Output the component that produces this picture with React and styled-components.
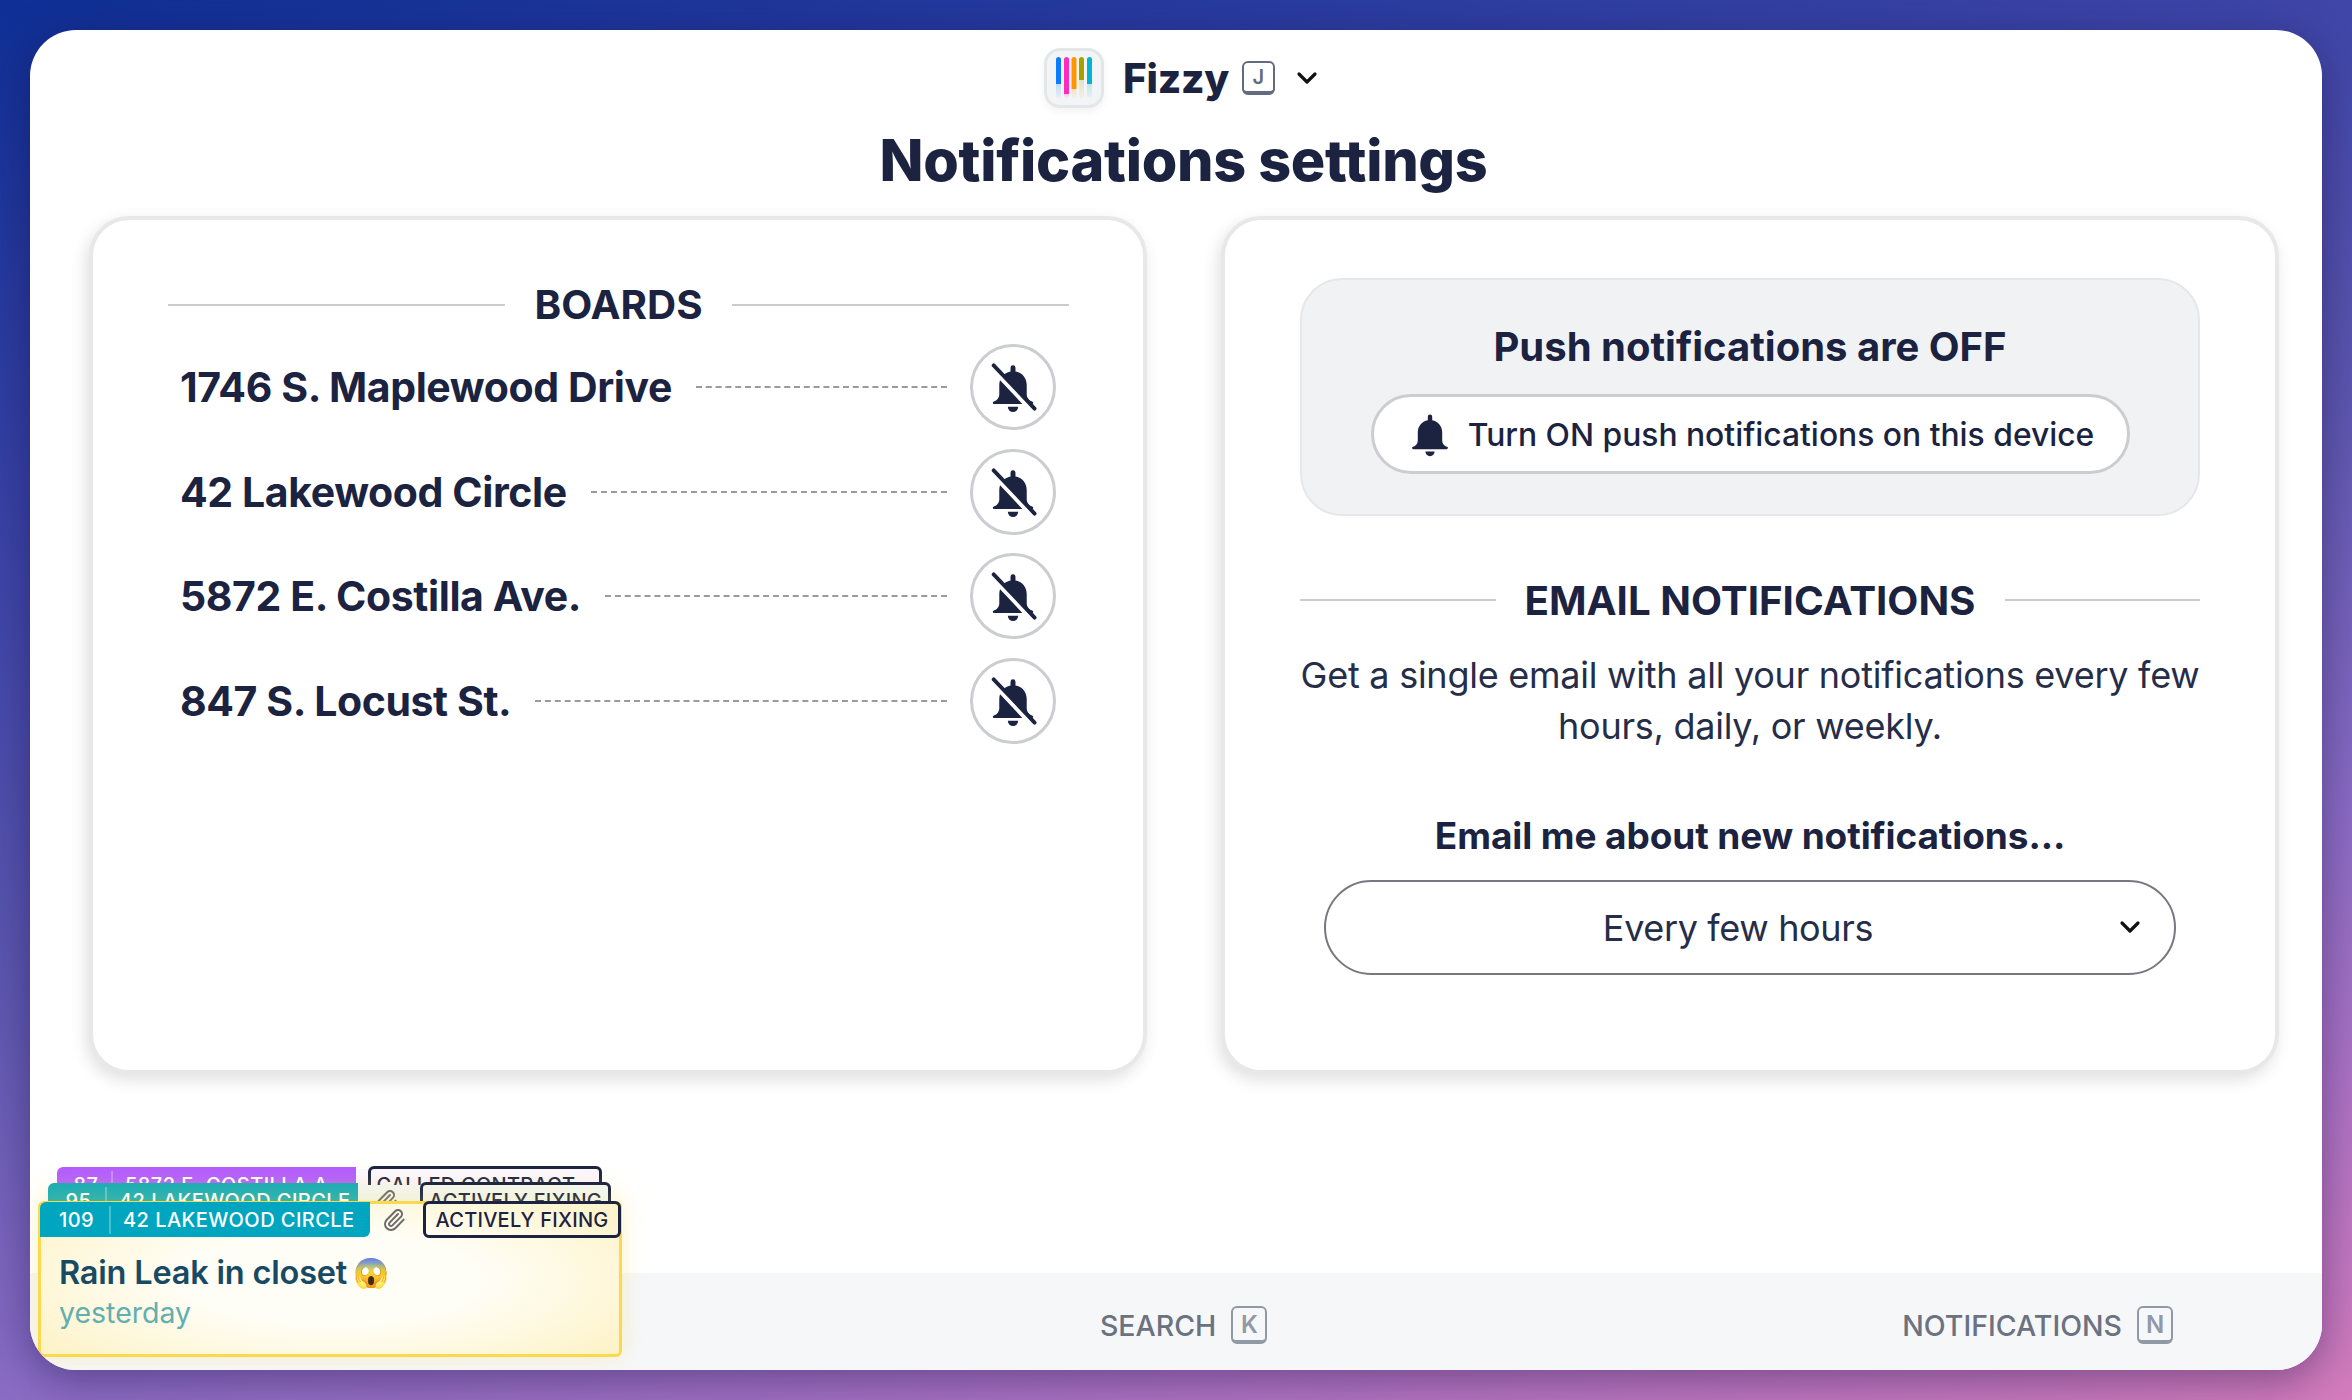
import React from "react";
import styled, { createGlobalStyle } from "styled-components";
import { Paperclip, ChevronDown } from "lucide-react";

const ink = "#1b2340";

const GlobalStyle = createGlobalStyle`
  html, body { margin: 0; padding: 0; }
  body {
    width: 2352px;
    height: 1400px;
    overflow: hidden;
    font-family: Inter, "Noto Sans", sans-serif;
    color: ${ink};
    background: linear-gradient(166deg, #0f2f96 0%, #3f46a8 30%, #5e58b0 50%, #8a6cc4 70%, #b074c4 85%, #d47cbc 100%);
  }
`;

const Window = styled.div`
  position: absolute;
  left: 30px;
  top: 30px;
  width: 2292px;
  height: 1340px;
  border-radius: 46px;
  background: #fff;
  overflow: hidden;
  display: flex;
  flex-direction: column;
`;

const WindowShadow = styled.div`
  position: absolute;
  left: 30px;
  top: 30px;
  width: 2292px;
  height: 1340px;
  border-radius: 46px;
  box-shadow: 0 10px 44px rgba(20, 10, 60, 0.42);
`;

const Main = styled.main`
  flex: 1;
  padding: 18px 44px 0 59px;
  display: flex;
  flex-direction: column;
`;

const Brand = styled.header`
  height: 60px;
  display: flex;
  justify-content: center;
  align-items: center;
`;

const LogoTile = styled.div`
  box-sizing: border-box;
  width: 60px;
  height: 60px;
  border-radius: 16px;
  background: #f3f4f6;
  border: 3px solid #e4e6ea;
  box-shadow: 0 4px 8px rgba(0, 0, 0, 0.05);
  display: flex;
  align-items: center;
  justify-content: center;
`;

const BrandName = styled.span`
  margin-left: 19px;
  font-size: 40.5px;
  font-weight: 800;
  letter-spacing: -0.3px;
`;

const Key = styled.span`
  box-sizing: border-box;
  display: inline-flex;
  align-items: center;
  justify-content: center;
  width: ${p => p.$w}px;
  height: ${p => p.$h}px;
  border: 2px solid ${p => p.$c};
  border-bottom-width: 4px;
  border-radius: 6px;
  font-size: ${p => p.$fs}px;
  font-weight: 600;
  color: ${p => p.$c};
`;

const BrandKey = styled(Key)`
  margin-left: 13px;
`;

const BrandChevron = styled.span`
  margin: 0 6px 0 23px;
  width: 19px;
  height: 38px;
  display: flex;
  align-items: center;
  justify-content: center;
  color: #111;

  svg {
    flex: none;
  }
`;

const Title = styled.h1`
  margin: 20px 0 0;
  height: 64px;
  line-height: 64px;
  text-align: center;
  font-size: 57.5px;
  font-weight: 800;
  letter-spacing: -0.3px;
`;

const Panels = styled.div`
  margin-top: 24px;
  display: grid;
  grid-template-columns: 1058px 1058px;
  gap: 74px;
`;

const Panel = styled.section`
  box-sizing: border-box;
  height: 858px;
  border: 4px solid #e8e8e8;
  border-radius: 40px;
  background: #fff;
  box-shadow: -3px 6px 16px rgba(0, 0, 0, 0.12);
  padding: ${p => p.$pad};
`;

const Divider = styled.div`
  display: flex;
  align-items: center;
  gap: 29px;
  font-size: 40.3px;
  font-weight: 700;
  white-space: nowrap;

  &::before,
  &::after {
    content: "";
    flex: 1;
    height: 2px;
    background: #cbcbd0;
  }
`;

const BoardList = styled.ul`
  list-style: none;
  margin: 15px 0 0;
  padding: 0 13px 0 12px;
  display: flex;
  flex-direction: column;
  gap: 18.7px;
`;

const BoardRow = styled.li`
  display: flex;
  align-items: center;
  height: 86px;
`;

const BoardName = styled.span`
  font-size: 41px;
  font-weight: 700;
  letter-spacing: -0.4px;
  white-space: nowrap;
`;

const Leader = styled.span`
  flex: 1;
  margin: 0 23px 0 24px;
  border-top: 2px dashed #9a9aa0;
`;

const BellCircle = styled.button`
  box-sizing: border-box;
  width: 86px;
  height: 86px;
  border-radius: 50%;
  border: 3px solid #cccdd1;
  background: #fff;
  padding: 0;
  display: flex;
  align-items: center;
  justify-content: center;
`;

const PushBox = styled.div`
  box-sizing: border-box;
  height: 238px;
  border: 2px solid #e6e7ea;
  border-radius: 42px;
  background: #f1f2f4;
  padding: 43px 68px 0;
  display: flex;
  flex-direction: column;
  align-items: center;
`;

const PushTitle = styled.div`
  font-size: 40px;
  line-height: 48px;
  font-weight: 700;
`;

const PushButton = styled.button`
  box-sizing: border-box;
  margin-top: 23px;
  width: 759px;
  height: 80px;
  border: 3px solid #cccdd1;
  border-radius: 40px;
  background: #fff;
  color: ${ink};
  font-family: inherit;
  font-size: 31.8px;
  font-weight: 500;
  display: flex;
  align-items: center;
  justify-content: center;
  gap: 14px;
`;

const EmailHead = styled(Divider)`
  margin-top: 60px;
  height: 48px;
`;

const Blurb = styled.p`
  margin: 26px 0 0;
  text-align: center;
  font-size: 36px;
  line-height: 51px;
  font-weight: 400;
  letter-spacing: -0.25px;
  color: #262d48;
`;

const SelectLabel = styled.div`
  margin-top: 61px;
  text-align: center;
  font-size: 37px;
  line-height: 46px;
  font-weight: 700;
  letter-spacing: -0.1px;
`;

const Select = styled.div`
  box-sizing: border-box;
  position: relative;
  margin: 21px 24px 0;
  height: 95px;
  border: 2px solid #77787f;
  border-radius: 48px;
  display: flex;
  align-items: center;
  justify-content: center;
  padding-right: 24px;
  font-size: 36px;
  letter-spacing: -0.35px;
  color: #262d48;
`;

const SelectChevron = styled.span`
  position: absolute;
  right: 35px;
  top: 26px;
  width: 19px;
  height: 38px;
  display: flex;
  align-items: center;
  justify-content: center;
  color: #111;

  svg {
    flex: none;
  }
`;

const Footer = styled.footer`
  height: 97px;
  background: #f6f7f9;
  display: flex;
  align-items: center;
  justify-content: flex-end;
  gap: 635px;
  padding: 7px 149px 0 0;
  box-sizing: border-box;
`;

const FooterLink = styled.span`
  display: flex;
  align-items: center;
  gap: 15px;
  font-size: 28.5px;
  font-weight: 500;
  color: #6b7280;
`;

const Stack = styled.div`
  position: absolute;
  left: 0;
  top: 0;
  width: 700px;
  height: 1400px;
  overflow: hidden;
  pointer-events: none;
  clip-path: inset(30px 0 30px 30px round 46px 0 0 46px);
`;

const Card = styled.article`
  box-sizing: border-box;
  position: absolute;
  left: ${p => p.$x}px;
  top: ${p => p.$y}px;
  width: ${p => p.$w}px;
  height: 156px;
  border: ${p => p.$border};
  border-radius: 6px;
  background: ${p => p.$bg};
  box-shadow: ${p => p.$glow};
`;

const CardBar = styled.div`
  display: flex;
  align-items: flex-start;
  margin: -2px 0 0 -1px;
`;

const BoardTag = styled.div`
  box-sizing: border-box;
  flex: none;
  height: 35px;
  width: ${p => p.$w}px;
  background: ${p => p.$c};
  border-radius: 6px 0 6px 0;
  color: #fff;
  display: flex;
  align-items: center;
  font-size: 20px;
  font-weight: 500;
  letter-spacing: 0.45px;
  white-space: nowrap;
  overflow: hidden;
`;

const TagNumber = styled.span`
  box-sizing: border-box;
  flex: none;
  width: ${p => p.$w}px;
  height: 28px;
  line-height: 28px;
  text-align: center;
  padding-left: 4px;
  border-right: 2px solid rgba(255, 255, 255, 0.28);
`;

const TagName = styled.span`
  padding-left: 12px;
`;

const ClipIcon = styled.span`
  box-sizing: border-box;
  flex: none;
  width: ${p => p.$w}px;
  height: 35px;
  padding-right: 6px;
  display: flex;
  align-items: center;
  justify-content: center;
  color: #6b6b6b;
`;

const Status = styled.div`
  box-sizing: border-box;
  flex: none;
  height: 37px;
  width: ${p => p.$w}px;
  margin-top: -1px;
  border: 3px solid ${ink};
  border-radius: 6px;
  display: flex;
  align-items: center;
  justify-content: center;
  font-size: 20px;
  font-weight: 500;
  letter-spacing: 0.25px;
  white-space: nowrap;
  overflow: hidden;
  color: ${ink};
`;

const CardTitle = styled.div`
  margin: 14px 0 0 18px;
  font-size: 32.5px;
  line-height: 42px;
  font-weight: 600;
  letter-spacing: -0.2px;
  color: #184a63;
  display: flex;
  align-items: center;
  gap: 6px;
`;

const Emoji = styled.span`
  font-size: 29px;
`;

const CardWhen = styled.div`
  margin: 1px 0 0 18px;
  font-size: 28.5px;
  line-height: 36px;
  color: #63aeb0;
`;

const BellShape = () => (
  <>
    <path d="M12 2.3a1.1 1.1 0 0 1 1.1 1.1v1.7c3 .5 5 3 5 6.1v4c0 1.6 1 2.8 2.4 3.2.7.2.6 1.2-.2 1.2H3.7c-.8 0-.9-1-.2-1.2 1.4-.4 2.4-1.6 2.4-3.2v-4c0-3.1 2-5.6 5-6.1V3.4A1.1 1.1 0 0 1 12 2.3z" />
    <path d="M9.7 20.8h4.6a2.3 2.3 0 0 1-4.6 0z" />
  </>
);

const Bell = ({ size }) => (
  <svg width={size} height={size} viewBox="0 0 24 24" fill={ink}>
    <BellShape />
  </svg>
);

const BellOff = () => (
  <svg width="54" height="54" viewBox="0 0 24 24" fill={ink}>
    <BellShape />
    <path d="M2.6 3.6 20.2 22.4" stroke="#fff" strokeWidth="2" strokeLinecap="round" />
    <path d="M3.4 2.4 21.6 21.6" stroke={ink} strokeWidth="1.7" strokeLinecap="round" />
  </svg>
);

const bars = [
  { x: 0, end: 27, c: "#0a7cff" },
  { x: 8, end: 37, c: "#ff2bc2" },
  { x: 15.5, end: 32, c: "#ff9500" },
  { x: 23, end: 23, c: "#a3a300" },
  { x: 31, end: 27, c: "#00b4d4" }
];

const Logo = () => (
  <svg width="37" height="42" viewBox="0 0 37 42">
    <defs>
      {bars.map((b, i) => (
        <linearGradient key={i} id={`fade${i}`} x1="0" y1="0" x2="0" y2="1">
          <stop offset={b.end / 41} stopColor={b.c} />
          <stop offset={b.end / 41} stopColor={b.c} stopOpacity="0.22" />
          <stop offset="1" stopColor={b.c} stopOpacity="0.04" />
        </linearGradient>
      ))}
    </defs>
    {bars.map((b, i) => (
      <rect key={i} x={b.x} y="0" width="5" height="41" rx="2.5" fill={`url(#fade${i})`} />
    ))}
  </svg>
);

const boards = [
  "1746 S. Maplewood Drive",
  "42 Lakewood Circle",
  "5872 E. Costilla Ave.",
  "847 S. Locust St."
];

export default function App() {
  return (
    <>
      <GlobalStyle />
      <WindowShadow />
      <Window>
        <Main>
          <Brand>
            <LogoTile>
              <Logo />
            </LogoTile>
            <BrandName>Fizzy</BrandName>
            <BrandKey $w={33} $h={34} $c="#646b80" $fs={20}>J</BrandKey>
            <BrandChevron>
              <ChevronDown size={32} strokeWidth={2.4} />
            </BrandChevron>
          </Brand>
          <Title>Notifications settings</Title>
          <Panels>
            <Panel $pad="60px 74px 0 75px">
              <Divider>BOARDS</Divider>
              <BoardList>
                {boards.map(name => (
                  <BoardRow key={name}>
                    <BoardName>{name}</BoardName>
                    <Leader />
                    <BellCircle>
                      <BellOff />
                    </BellCircle>
                  </BoardRow>
                ))}
              </BoardList>
            </Panel>
            <Panel $pad="58px 75px 0 75px">
              <PushBox>
                <PushTitle>Push notifications are OFF</PushTitle>
                <PushButton>
                  <Bell size={48} />
                  Turn ON push notifications on this device
                </PushButton>
              </PushBox>
              <EmailHead>EMAIL NOTIFICATIONS</EmailHead>
              <Blurb>
                Get a single email with all your notifications every few hours, daily, or weekly.
              </Blurb>
              <SelectLabel>Email me about new notifications...</SelectLabel>
              <Select>
                Every few hours
                <SelectChevron>
                  <ChevronDown size={32} strokeWidth={2.4} />
                </SelectChevron>
              </Select>
            </Panel>
          </Panels>
        </Main>
        <Footer>
          <FooterLink>
            SEARCH
            <Key $w={36} $h={38} $c="#9299a6" $fs={24}>K</Key>
          </FooterLink>
          <FooterLink>
            NOTIFICATIONS
            <Key $w={36} $h={38} $c="#9299a6" $fs={24}>N</Key>
          </FooterLink>
        </Footer>
      </Window>
      <Stack>
        <Card $x={58} $y={1169} $w={543} $border="none" $bg="#fbf7ff" $glow="none">
          <CardBar>
            <BoardTag $w={299} $c="#b35cff">
              <TagNumber $w={56}>87</TagNumber>
              <TagName>5872 E. COSTILLA A...</TagName>
            </BoardTag>
            <ClipIcon $w={12} />
            <Status $w={234}>CALLED CONTRACT...</Status>
          </CardBar>
        </Card>
        <Card $x={49} $y={1185} $w={562} $border="none" $bg="linear-gradient(90deg, #fdf6d6, #f2f6ee 50%, #f4f7f0)" $glow="0 0 22px rgba(250, 220, 120, 0.25)">
          <CardBar>
            <BoardTag $w={310} $c="#19adb5">
              <TagNumber $w={59}>95</TagNumber>
              <TagName>42 LAKEWOOD CIRCLE</TagName>
            </BoardTag>
            <ClipIcon $w={62}>
              <Paperclip size={24} />
            </ClipIcon>
            <Status $w={191}>ACTIVELY FIXING</Status>
          </CardBar>
        </Card>
        <Card
          $x={38}
          $y={1201}
          $w={584}
          $border="3px solid #fbd94c"
          $bg="radial-gradient(ellipse 420px 130px at 50% 50%, #fffef6 35%, #fdf0bd 100%)"
          $glow="0 0 26px rgba(250, 220, 110, 0.32)"
        >
          <CardBar>
            <BoardTag $w={330} $c="#00a6c0">
              <TagNumber $w={71}>109</TagNumber>
              <TagName>42 LAKEWOOD CIRCLE</TagName>
            </BoardTag>
            <ClipIcon $w={53}>
              <Paperclip size={24} />
            </ClipIcon>
            <Status $w={198}>ACTIVELY FIXING</Status>
          </CardBar>
          <CardTitle>
            Rain Leak in closet
            <Emoji>😱</Emoji>
          </CardTitle>
          <CardWhen>yesterday</CardWhen>
        </Card>
      </Stack>
    </>
  );
}
